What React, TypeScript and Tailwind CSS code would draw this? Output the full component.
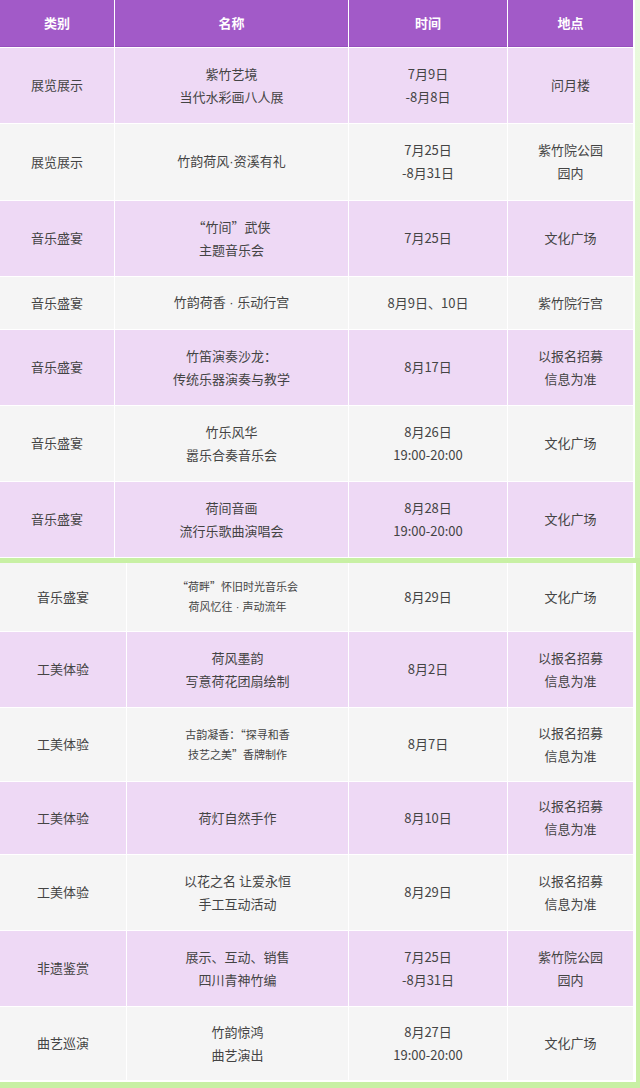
import React from "react";

type Row = {
  cat: string;
  name: string[];
  time: string[];
  place: string[];
  h: number;
  small?: boolean;
};

const topRows: Row[] = [
  { cat: "展览展示", name: ["紫竹艺境", "当代水彩画八人展"], time: ["7月9日", "-8月8日"], place: ["问月楼"], h: 75 },
  { cat: "展览展示", name: ["竹韵荷风·资溪有礼"], time: ["7月25日", "-8月31日"], place: ["紫竹院公园", "园内"], h: 76 },
  { cat: "音乐盛宴", name: ["“竹间”武侠", "主题音乐会"], time: ["7月25日"], place: ["文化广场"], h: 75 },
  { cat: "音乐盛宴", name: ["竹韵荷香 · 乐动行宫"], time: ["8月9日、10日"], place: ["紫竹院行宫"], h: 52 },
  { cat: "音乐盛宴", name: ["竹笛演奏沙龙：", "传统乐器演奏与教学"], time: ["8月17日"], place: ["以报名招募", "信息为准"], h: 75 },
  { cat: "音乐盛宴", name: ["竹乐风华", "嚣乐合奏音乐会"], time: ["8月26日", "19:00-20:00"], place: ["文化广场"], h: 75 },
  { cat: "音乐盛宴", name: ["荷间音画", "流行乐歌曲演唱会"], time: ["8月28日", "19:00-20:00"], place: ["文化广场"], h: 75 },
];

const bottomRows: Row[] = [
  { cat: "音乐盛宴", name: ["“荷畔”怀旧时光音乐会", "荷风忆往 · 声动流年"], time: ["8月29日"], place: ["文化广场"], h: 68, small: true },
  { cat: "工美体验", name: ["荷风墨韵", "写意荷花团扇绘制"], time: ["8月2日"], place: ["以报名招募", "信息为准"], h: 75 },
  { cat: "工美体验", name: ["古韵凝香：“探寻和香", "技艺之美”香牌制作"], time: ["8月7日"], place: ["以报名招募", "信息为准"], h: 73, small: true },
  { cat: "工美体验", name: ["荷灯自然手作"], time: ["8月10日"], place: ["以报名招募", "信息为准"], h: 72 },
  { cat: "工美体验", name: ["以花之名 让爱永恒", "手工互动活动"], time: ["8月29日"], place: ["以报名招募", "信息为准"], h: 75 },
  { cat: "非遗鉴赏", name: ["展示、互动、销售", "四川青神竹编"], time: ["7月25日", "-8月31日"], place: ["紫竹院公园", "园内"], h: 75 },
  { cat: "曲艺巡演", name: ["竹韵惊鸿", "曲艺演出"], time: ["8月27日", "19:00-20:00"], place: ["文化广场"], h: 73 },
];

const font = { fontFamily: '"Noto Sans CJK SC", "Noto Sans", sans-serif' };

// the middle dot is drawn narrow, as in a latin face
function Line({ text }: { text: string }) {
  const parts = text.split(/( ?· ?)/);
  return (
    <span>
      {parts.map((p, i) =>
        p.includes("·") ? (
          <span key={i} className="font-['Liberation_Sans']">
            {p}
          </span>
        ) : (
          <React.Fragment key={i}>{p}</React.Fragment>
        )
      )}
    </span>
  );
}

function Cell({ lines, bg, small }: { lines: string[]; bg: string; small?: boolean }) {
  return (
    <div className={`${bg} flex flex-col items-center justify-center pb-[2px] text-center text-[#444444] ${small ? "text-[11px] leading-[20px]" : "text-[13px] leading-[23px]"}`}>
      {lines.map((l, i) => (
        <Line key={i} text={l} />
      ))}
    </div>
  );
}

function TableRows({ rows, first, cols }: { rows: Row[]; first: "purple" | "gray"; cols: string }) {
  return (
    <>
      {rows.map((r, i) => {
        const purple = (i % 2 === 0) === (first === "purple");
        const bg = purple ? "bg-[#eed9f5]" : "bg-[#f5f5f5]";
        return (
          <div key={i} className={`grid ${cols} gap-x-px`} style={{ height: r.h }}>
            <Cell lines={[r.cat]} bg={bg} />
            <Cell lines={r.name} bg={bg} small={r.small} />
            <Cell lines={r.time} bg={bg} />
            <Cell lines={r.place} bg={bg} />
          </div>
        );
      })}
    </>
  );
}

export default function App() {
  return (
    <div className="w-[640px] h-[1088px] bg-[#c8f0a4] overflow-hidden" style={font}>
      {/* upper table */}
      <div className="flex bg-gradient-to-b from-[#ecfae2] to-[#cff2b3]">
        <div className="w-[635px] bg-white flex flex-col gap-y-px pr-[2px] pb-px">
          <div className="grid grid-cols-[114px_233px_158px_125px] gap-x-px h-[47px]">
            {["类别", "名称", "时间", "地点"].map((t) => (
              <div key={t} className="bg-[#a25ac8] border-b border-[#9650bd] flex items-center justify-center text-white text-[13px] font-bold">
                {t}
              </div>
            ))}
          </div>
          <TableRows rows={topRows} first="purple" cols="grid-cols-[114px_233px_158px_125px]" />
        </div>
      </div>

      {/* lower table */}
      <div className="mt-[5px] flex">
        <div className="w-[636px] bg-white flex flex-col gap-y-px pr-[3px] pb-[2px]">
          <TableRows rows={bottomRows} first="gray" cols="grid-cols-[126px_221px_158px_125px]" />
        </div>
      </div>
    </div>
  );
}
